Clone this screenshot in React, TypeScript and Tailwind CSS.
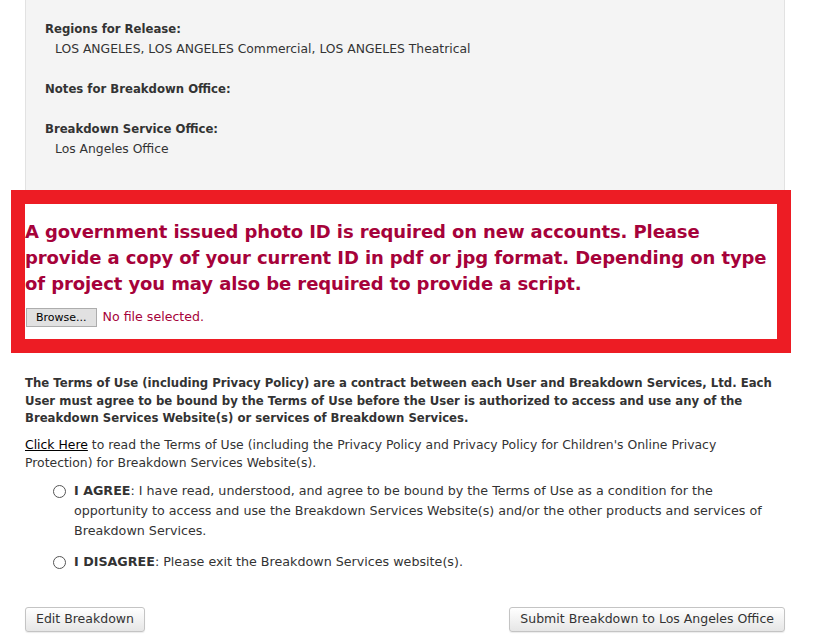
export default function App() {
  return (
    <div className="w-[823px] h-[639px] overflow-hidden bg-white text-[#333] font-['DejaVu_Sans',Verdana,sans-serif]">
      <div className="pl-[25px] w-[785px]">
        {/* summary panel */}
        <div className="bg-[#f4f4f4] border-x border-[#e2e2e2] h-[190px] pl-[19px] pt-[19px] text-[12.35px] leading-[20px]">
          <div className="font-bold text-[11.7px]">Regions for Release:</div>
          <div className="pl-[10px]">LOS ANGELES, LOS ANGELES Commercial, LOS ANGELES Theatrical</div>
          <div className="font-bold text-[11.7px] mt-[20px]">Notes for Breakdown Office:</div>
          <div className="font-bold text-[11.7px] mt-[20px]">Breakdown Service Office:</div>
          <div className="pl-[10px]">Los Angeles Office</div>
        </div>

        {/* ID notice */}
        <div className="-ml-[14px] w-[780px] border-[14px] border-[#ed1c24] bg-white">
          <div className="pt-[15px] pb-[12px] text-[#a6023a]">
            <p className="font-bold text-[18px] leading-[26px] tracking-[-0.1px]">
              A government issued photo ID is required on new accounts. Please provide a copy of your current ID in pdf or jpg format. Depending on type of project you may also be required to provide a script.
            </p>
            <div className="mt-[11px] flex items-center gap-[6px] text-[12.6px]">
              <button className="ml-px h-[19px] px-[9px] bg-[#e1e1e1] border border-[#adadad] text-[11px] text-black leading-none">
                Browse...
              </button>
              <span>No file selected.</span>
            </div>
          </div>
        </div>

        {/* terms */}
        <div className="pt-[22px]">
          <p className="font-bold text-[11.7px] leading-[17.5px]">
            The Terms of Use (including Privacy Policy) are a contract between each User and Breakdown Services, Ltd. Each User must agree to be bound by the Terms of Use before the User is authorized to access and use any of the Breakdown Services Website(s) or services of Breakdown Services.
          </p>
          <p className="mt-[8px] text-[12.4px] leading-[18px] pr-[40px]">
            <a className="underline text-black">Click Here</a> to read the Terms of Use (including the Privacy Policy and Privacy Policy for Children's Online Privacy Protection) for Breakdown Services Website(s).
          </p>

          <div className="mt-[9px] pl-[28px] pr-[10px] flex flex-col gap-[11px] text-[12.7px] leading-[20px]">
            <label className="flex items-start gap-[8px]">
              <span className="mt-[4px] shrink-0 w-[13px] h-[13px] rounded-full border border-[#555] bg-white" />
              <span>
                <b>I AGREE</b>: I have read, understood, and agree to be bound by the Terms of Use as a condition for the opportunity to access and use the Breakdown Services Website(s) and/or the other products and services of Breakdown Services.
              </span>
            </label>
            <label className="flex items-start gap-[8px]">
              <span className="mt-[4px] shrink-0 w-[13px] h-[13px] rounded-full border border-[#555] bg-white" />
              <span>
                <b>I DISAGREE</b>: Please exit the Breakdown Services website(s).
              </span>
            </label>
          </div>
        </div>

        {/* actions */}
        <div className="mt-[35px] flex justify-between">
          <button className="h-[25px] px-[10px] rounded-[3px] border border-[#c4c4c4] bg-gradient-to-b from-white to-[#e6e6e6] text-[12.5px] text-[#333] shadow-[0_1px_1px_rgba(0,0,0,0.08)]">
            Edit Breakdown
          </button>
          <button className="h-[25px] px-[10px] rounded-[3px] border border-[#c4c4c4] bg-gradient-to-b from-white to-[#e6e6e6] text-[12.5px] text-[#333] shadow-[0_1px_1px_rgba(0,0,0,0.08)]">
            Submit Breakdown to Los Angeles Office
          </button>
        </div>
      </div>
    </div>
  );
}
